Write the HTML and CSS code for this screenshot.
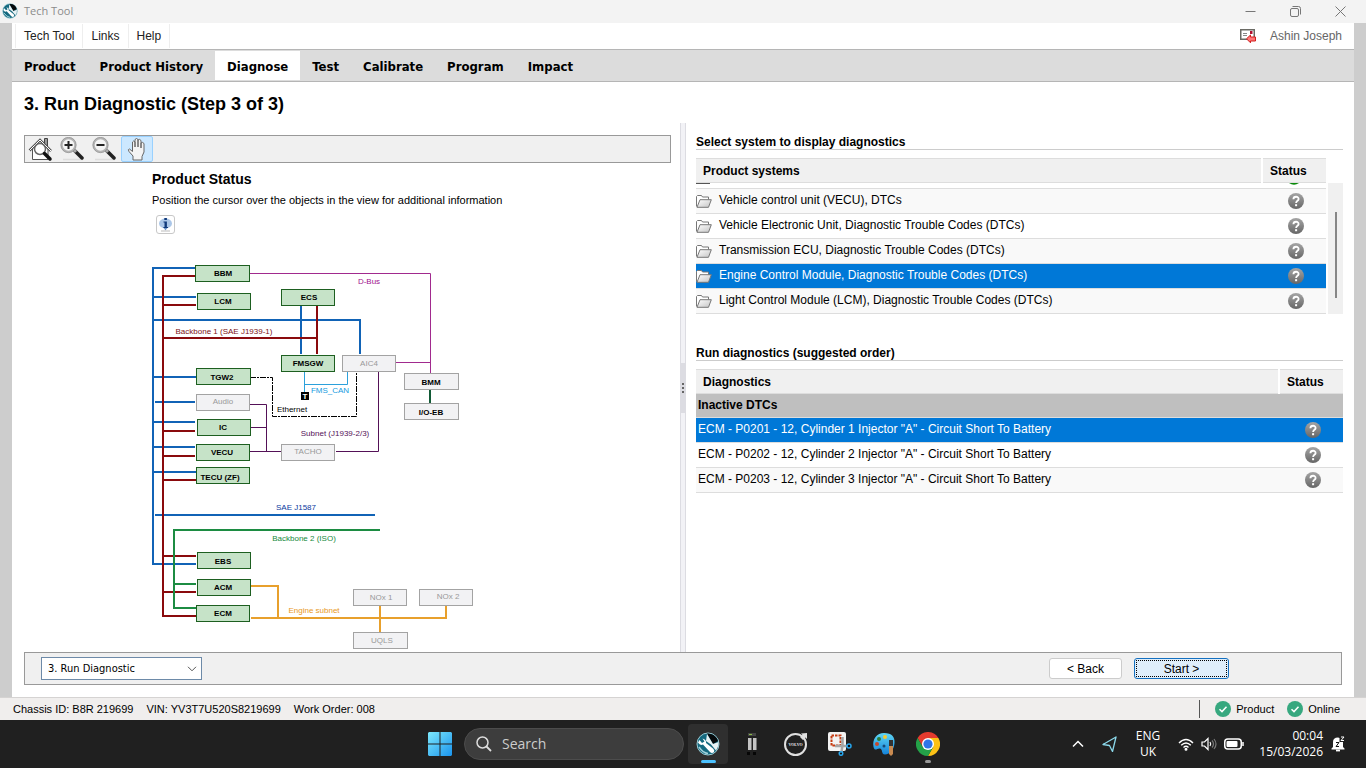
FILE: index.html
```html
<!DOCTYPE html>
<html lang="en">
<head>
<meta charset="utf-8">
<title>Tech Tool</title>
<link rel="stylesheet" href="styles.css">
</head>
<body>
<svg class="defs" aria-hidden="true">
  <defs>
    <linearGradient id="gray" x1="0" y1="0" x2="0" y2="1"><stop offset="0" stop-color="#a5a5a5"/><stop offset="1" stop-color="#666"/></linearGradient>
    <linearGradient id="fold" x1="0" y1="0" x2="1" y2="1"><stop offset="0" stop-color="#fff"/><stop offset="1" stop-color="#c4c4c4"/></linearGradient>
    <linearGradient id="win" x1="0" y1="0" x2="1" y2="1"><stop offset="0" stop-color="#7de8fb"/><stop offset="1" stop-color="#1a94ee"/></linearGradient>
    <linearGradient id="paint" x1="0" y1="0" x2="0" y2="1"><stop offset="0" stop-color="#5fd6f5"/><stop offset="1" stop-color="#1482d8"/></linearGradient>
    <symbol id="q" viewBox="0 0 16 16"><circle cx="8" cy="8" r="8" fill="url(#gray)"/><path d="M5.4 6.2C5.4 2.9 10.8 3 10.6 6.1 10.5 7.8 8.1 7.9 8.1 10" fill="none" stroke="#fff" stroke-width="1.8"/><rect x="7.1" y="11.2" width="2" height="2" fill="#fff"/></symbol>
    <symbol id="folder" viewBox="0 0 16 14"><path d="M.5 12.500V2.500L1.500 1.500H5.500L6.500 3H12.500V5.500" fill="#fff" stroke="#777"/><path d="M1 13.300L4 5.700H15.300L12.500 13.300Z" fill="url(#fold)" stroke="#777"/></symbol>
    <symbol id="logo" viewBox="0 0 24 24"><circle cx="12" cy="12" r="11" fill="#15697f" stroke="#9ccbd4"/><path d="M11 1.5A10.5 10.5 0 0 1 22 9L17 12Z" fill="#05090b"/><path d="M11 2L17 12 22.5 10Q23 14 20 18.5L15 12.5 10 9Z" fill="#e8f2f4"/><path d="M2 10.5Q4 14 7 12.5L14 20Q16 22 18 20 19 18 17 16.5L10 11Q10.500 7.500 6.500 6.500L8.500 9.500 6 11 3.500 8Z" fill="#fff"/><path d="M3 15Q7 21 12 21.500" fill="none" stroke="#9fd0da" stroke-width="1.500"/></symbol>
    <symbol id="ok" viewBox="0 0 16 16"><circle cx="8" cy="8" r="8" fill="#37a87f"/><path d="M4.500 8.200L7 10.600 11.500 5.800" fill="none" stroke="#fff" stroke-width="1.500"/></symbol>
    <symbol id="lens" viewBox="0 0 24 24"><path d="M3 22.500H23" stroke="#ddd" stroke-width="1.500"/><path d="M15 14L22 21" stroke="#222" stroke-width="3.500" stroke-linecap="round"/><path d="M13.500 12.500L16 15" stroke="#aaa" stroke-width="3"/><circle cx="8.500" cy="8" r="6.800" fill="#f4f4f4" stroke="#b5b5b5" stroke-width="2"/><circle cx="8.500" cy="8" r="7.700" fill="none" stroke="#777" stroke-width=".5"/></symbol>
  </defs>
</svg>

<header class="titlebar">
  <svg class="title-logo" aria-hidden="true"><use href="#logo"/></svg>
  <span class="title-text">Tech Tool</span>
  <button class="win-btn" aria-label="Minimize"><svg width="11" height="11" viewBox="0 0 11 11"><path d="M.5 5.500h10" stroke="#777"/></svg></button>
  <button class="win-btn" aria-label="Restore"><svg width="11" height="11" viewBox="0 0 11 11" fill="none" stroke="#777"><rect x=".5" y="2.500" width="8" height="8" rx="1.500"/><path d="M2.500.5H8.500Q10.500.5 10.500 2.500V8.500"/></svg></button>
  <button class="win-btn" aria-label="Close"><svg width="11" height="11" viewBox="0 0 11 11"><path d="M.5.5l10 10M10.500.5l-10 10" stroke="#777"/></svg></button>
</header>

<div class="app">
  <div class="menubar">
    <button class="menu">Tech Tool</button><button class="menu">Links</button><button class="menu">Help</button>
    <svg class="mail" width="17" height="15" viewBox="0 0 17 15" aria-hidden="true"><rect x=".75" y=".75" width="13.500" height="9.500" fill="#fff" stroke="#6b6b65" stroke-width="1.500"/><path d="M3 4.500h4M3 6.500h4" stroke="#888"/><rect x="10" y="2" width="2.500" height="3" fill="#b01030"/><path d="M6.500 9.800L10.500 6V8H15.500V12H10.500V13.800Z" fill="#f77" stroke="#d21c1c"/></svg>
    <span class="user">Ashin Joseph</span>
  </div>
  <nav class="tabs">
    <a href="#" class="tab">Product</a><a href="#" class="tab">Product History</a><a href="#" class="tab active">Diagnose</a><a href="#" class="tab">Test</a><a href="#" class="tab">Calibrate</a><a href="#" class="tab">Program</a><a href="#" class="tab">Impact</a>
  </nav>
  <h1>3. Run Diagnostic (Step 3 of 3)</h1>

  <main class="split">
    <section class="left">
      <div class="tools">
        <button class="tool" aria-label="Fit to view"><svg width="25" height="25" viewBox="0 0 25 25"><path d="M16.500 8V1.500h3V11" fill="#999" stroke="#444"/><path d="M4.500 12V22.500H20V12" fill="#fff" stroke="#555"/><path d="M1.500 13.500L12 3 23 14" fill="none" stroke="#555" stroke-width="2.500"/><path d="M1.500 13.500L12 3 23 14" fill="none" stroke="#fff"/><circle cx="12" cy="12" r="5.500" fill="#fff" stroke="#666" stroke-width="1.500"/><path d="M16.500 16.500L22 22" stroke="#111" stroke-width="3.500" stroke-linecap="round"/></svg></button>
        <button class="tool" aria-label="Zoom in"><svg width="24" height="24" viewBox="0 0 24 24"><use href="#lens"/><path d="M4.500 8h8M8.500 4v8" stroke="#222" stroke-width="2"/></svg></button>
        <button class="tool" aria-label="Zoom out"><svg width="24" height="24" viewBox="0 0 24 24"><use href="#lens"/><path d="M4.500 8h8" stroke="#222" stroke-width="2"/></svg></button>
        <button class="tool pressed" aria-label="Pan"><svg width="24" height="24" viewBox="0 0 24 24"><path d="M8 23V19L4 14.500Q2.500 12 4.500 12L7.500 14.500V5Q8.500 3 10 5V10 2.500Q11.500.5 13 2.500V10 3Q14.500 1.500 16 3.500V11 6Q17.500 4.500 19 6.500V15L17 19.500V23Z" fill="#f4f4f4" stroke="#666"/></svg></button>
      </div>
      <div class="view">
        <h2 class="view-title">Product Status</h2>
        <p class="view-note">Position the cursor over the objects in the view for additional information</p>
        <button class="info" aria-label="Information"><svg width="15" height="15" viewBox="0 0 15 15"><ellipse cx="7.500" cy="6.500" rx="6.500" ry="5" fill="#aac6e8"/><path d="M5 10l2.500 3.500L10 10z" fill="#6b95cb"/><path d="M3 14h9" stroke="#bbb"/><path d="M6.300 1h2.600v2H6.300zM5.500 4.500h3.400V10H10v1H5.500V10h1V5.500h-1z" fill="#103a7c"/></svg></button>
        <svg class="network" viewBox="140 240 350 412" role="img" aria-label="Product network status">
          <g fill="none" stroke="#1163b6" stroke-width="2">
            <path d="M196 268H153V564H196M153 297H196M153 320H360V354M301 306V354M153 377H196M155 402H195M153 422H195M153 447H195M153 472H196M155 515H375"/>
          </g>
          <g fill="none" stroke="#8a0a0d" stroke-width="2">
            <path d="M196 276H163V616H196M163 305H196M163 338H317V306M317 338V354M163 431H195M163 456H195M163 480H196M163 556H196M163 592H196"/>
          </g>
          <path d="M380 530H174V608H196M174 584H196" fill="none" stroke="#1c8c42" stroke-width="2"/>
          <path d="M251 586H278V618M251 618H446V605M380 605V632" fill="none" stroke="#e8a02c" stroke-width="2"/>
          <path d="M250 273.500H430.500V374M396 362.500H430.500" fill="none" stroke="#a12a8e"/>
          <path d="M250 404.500H266.500V451.500M251 427.500H266.500M250 451.500H281M336 451.500H378.500V372" fill="none" stroke="#541157"/>
          <path d="M304.500 372V392M304.500 384.500H347.500V372" fill="none" stroke="#2ba0db"/>
          <path d="M250 377.500H272.500V416.500H356.500V372" fill="none" stroke="#000" stroke-dasharray="6 1 2 1"/>
          <path d="M430 390V403" stroke="#125a36" stroke-width="2"/>
          <rect x="301" y="392" width="8" height="8" fill="#000"/><text x="305" y="399" fill="#fff" font-size="8" font-weight="bold">T</text>
          <g class="on">
            <rect x="195.500" y="265.500" width="54" height="16"/><rect x="197.500" y="293.500" width="53" height="16"/><rect x="281.500" y="289.500" width="53" height="16"/>
            <rect x="281.500" y="355.500" width="53" height="16"/><rect x="196.500" y="368.500" width="54" height="16"/><rect x="197.500" y="419.500" width="53" height="16"/>
            <rect x="196.500" y="444.500" width="53" height="16"/><rect x="196.500" y="467.500" width="53" height="16"/><rect x="197.500" y="552.500" width="53" height="16"/>
            <rect x="197.500" y="579.500" width="53" height="16"/><rect x="196.500" y="605.500" width="53" height="16"/>
          </g>
          <g class="off">
            <rect x="342.500" y="355.500" width="53" height="16"/><rect x="404.500" y="373.500" width="54" height="16"/><rect x="404.500" y="403.500" width="54" height="16"/>
            <rect x="196.500" y="394.500" width="53" height="16"/><rect x="281.500" y="444.500" width="53" height="16"/><rect x="353.500" y="589.500" width="53" height="16"/>
            <rect x="419.500" y="589.500" width="53" height="16"/><rect x="353.500" y="632.500" width="54" height="16"/>
          </g>
          <g class="lbl strong">
            <text x="223" y="276">BBM</text><text x="223" y="304">LCM</text><text x="309" y="300">ECS</text><text x="308" y="366">FMSGW</text>
            <text x="222" y="380">TGW2</text><text x="223" y="430">IC</text><text x="222" y="455">VECU</text><text x="220" y="480">TECU (ZF)</text>
            <text x="223" y="564">EBS</text><text x="223" y="590">ACM</text><text x="223" y="616">ECM</text><text x="431" y="385">BMM</text><text x="431" y="415">I/O-EB</text>
          </g>
          <g class="lbl dim">
            <text x="369" y="366">AIC4</text><text x="223" y="404">Audio</text><text x="308" y="454">TACHO</text><text x="381" y="600">NOx 1</text><text x="448" y="599">NOx 2</text><text x="382" y="643">UQLS</text>
          </g>
          <g class="lbl">
            <text x="292" y="412">Ethernet</text>
            <text x="369" y="284" fill="#a0128e">D-Bus</text><text x="224" y="334" fill="#7a0f14">Backbone 1 (SAE J1939-1)</text><text x="330" y="393" fill="#149ae0">FMS_CAN</text>
            <text x="335" y="436" fill="#541157">Subnet (J1939-2/3)</text><text x="296" y="510" fill="#0a3aa0">SAE J1587</text><text x="304" y="541" fill="#158a3c">Backbone 2 (ISO)</text><text x="314" y="613" fill="#e8981c">Engine subnet</text>
          </g>
        </svg>
      </div>
    </section>

    <div class="splitter"><div class="grip"><i></i><i></i><i></i></div></div>

    <section class="right">
      <h2 class="section">Select system to display diagnostics</h2>
      <div class="systems">
        <table>
          <colgroup><col><col class="col-status"></colgroup>
          <thead><tr><th>Product systems</th><th>Status</th></tr></thead>
          <tbody>
            <tr class="clipped"><td><svg width="14" height="1"><rect width="14" height="1" fill="#555"/></svg></td><td class="st"><svg width="12" height="2" viewBox="0 0 12 2"><path d="M1 0h10Q6 3.500 1 0z" fill="#0a8a0a"/></svg></td></tr>
            <tr class="alt"><td><div class="sys"><svg class="folder"><use href="#folder"/></svg>Vehicle control unit (VECU), DTCs</div></td><td class="st"><svg class="q"><use href="#q"/></svg></td></tr>
            <tr><td><div class="sys"><svg class="folder"><use href="#folder"/></svg>Vehicle Electronic Unit, Diagnostic Trouble Codes (DTCs)</div></td><td class="st"><svg class="q"><use href="#q"/></svg></td></tr>
            <tr class="alt"><td><div class="sys"><svg class="folder"><use href="#folder"/></svg>Transmission ECU, Diagnostic Trouble Codes (DTCs)</div></td><td class="st"><svg class="q"><use href="#q"/></svg></td></tr>
            <tr class="sel"><td><div class="sys"><svg class="folder"><use href="#folder"/></svg>Engine Control Module, Diagnostic Trouble Codes (DTCs)</div></td><td class="st"><svg class="q"><use href="#q"/></svg></td></tr>
            <tr class="alt"><td><div class="sys"><svg class="folder"><use href="#folder"/></svg>Light Control Module (LCM), Diagnostic Trouble Codes (DTCs)</div></td><td class="st"><svg class="q"><use href="#q"/></svg></td></tr>
          </tbody>
        </table>
        <div class="track"><div class="thumb"></div></div>
      </div>
      <h2 class="section second">Run diagnostics (suggested order)</h2>
      <table class="diags">
        <colgroup><col><col class="col-status"></colgroup>
        <thead><tr><th>Diagnostics</th><th>Status</th></tr></thead>
        <tbody>
          <tr class="group"><td colspan="2">Inactive DTCs</td></tr>
          <tr class="sel"><td>ECM - P0201 - 12, Cylinder 1 Injector "A" - Circuit Short To Battery</td><td class="st"><svg class="q"><use href="#q"/></svg></td></tr>
          <tr><td>ECM - P0202 - 12, Cylinder 2 Injector "A" - Circuit Short To Battery</td><td class="st"><svg class="q"><use href="#q"/></svg></td></tr>
          <tr class="alt"><td>ECM - P0203 - 12, Cylinder 3 Injector "A" - Circuit Short To Battery</td><td class="st"><svg class="q"><use href="#q"/></svg></td></tr>
        </tbody>
      </table>
    </section>
  </main>

  <div class="actions">
    <div class="step-box">
      <select class="step" aria-label="Step"><option>3. Run Diagnostic</option></select>
      <svg class="step-arrow" width="10" height="6" viewBox="0 0 10 6" aria-hidden="true"><path d="M1 .8l4 4 4-4" fill="none" stroke="#555"/></svg>
    </div>
    <button class="btn">&lt; Back</button>
    <button class="btn primary"><span>Start &gt;</span></button>
  </div>
</div>

<footer class="status">
  <span>Chassis ID: B8R 219699</span><span>VIN: YV3T7U520S8219699</span><span>Work Order: 008</span>
  <div class="links"><svg class="q"><use href="#ok"/></svg><span>Product</span><svg class="q"><use href="#ok"/></svg><span>Online</span></div>
</footer>

<div class="taskbar">
  <div class="dock">
    <button class="task" aria-label="Start"><svg width="24" height="24" viewBox="0 0 24 24"><path d="M1 0h10.500v11.500H0V1zM12.500 0H23l1 1v10.500H12.500zM0 12.500h11.500V24H1l-1-1zM12.500 12.500H24V23l-1 1H12.500z" fill="url(#win)"/></svg></button>
    <label class="search"><svg width="16" height="16" viewBox="0 0 16 16"><circle cx="6.500" cy="6.500" r="5.500" fill="none" stroke="#ddd" stroke-width="1.500"/><path d="M10.500 10.500L15 15" stroke="#ddd" stroke-width="1.800"/></svg><input type="text" placeholder="Search" aria-label="Search"></label>
    <button class="task open" aria-label="Tech Tool"><svg width="24" height="24"><use href="#logo"/></svg></button>
    <button class="task" aria-label="Adapter"><svg width="12" height="24" viewBox="0 0 12 24"><rect x="2" y="1" width="8" height="3" fill="#444"/><rect x="3" y="2" width="3" height="1" fill="#8b4"/><rect x="2" y="6" width="3.500" height="12" fill="#c4c4c4"/><rect x="7" y="6" width="3.500" height="12" fill="#c4c4c4"/><rect x="1" y="20" width="3" height="3" fill="#060606"/><rect x="7" y="20" width="3" height="3" fill="#060606"/></svg></button>
    <button class="task" aria-label="Volvo"><svg width="24" height="24" viewBox="0 0 24 24"><circle cx="11.500" cy="12.500" r="10.500" fill="none" stroke="#e0e0e0" stroke-width="2"/><path d="M17 1.500L23 1V7L21.500 5.500 19 8 16 5 18.500 3Z" fill="#e0e0e0"/><text x="11.500" y="14" text-anchor="middle" class="volvo">VOLVO</text></svg></button>
    <button class="task" aria-label="Snipping Tool"><svg width="24" height="24" viewBox="0 0 24 24"><rect x="0" y="0" width="18" height="19" rx="2" fill="#f3f3f3"/><rect x="3.500" y="3.500" width="9" height="10" fill="none" stroke="#c53c13" stroke-width="2" stroke-dasharray="2.500 1"/><path d="M7 14H12L20 14M14.500 5V13L13.500 20" fill="none" stroke="#a5a5a5" stroke-width="2.500"/><circle cx="21" cy="14" r="2" fill="#111" stroke="#26a5ec" stroke-width="1.500"/><circle cx="13" cy="21.500" r="1.800" fill="#111" stroke="#26a5ec" stroke-width="1.500"/></svg></button>
    <button class="task" aria-label="Paint"><svg width="24" height="24" viewBox="0 0 24 24"><path d="M12 1C20 1 23 5 22.500 11 22 18 18 22 13 22.500 9 22.500 11 17 8 16.500 5 16 3 20 1.500 15 0 7 5 1 12 1Z" fill="url(#paint)"/><circle cx="7" cy="7" r="2" fill="#2a7d38"/><circle cx="13" cy="5" r="2" fill="#f2c832"/><circle cx="5" cy="12" r="2" fill="#c8482b"/><circle cx="12" cy="14" r="1.500" fill="#174a78"/><rect x="17" y="8" width="4" height="7" fill="#333"/><path d="M17 14h4v8l-2 2-2-2z" fill="#c98a50"/></svg></button>
    <button class="task running" aria-label="Chrome"><svg width="24" height="24" viewBox="0 0 24 24"><path d="M12 6H22.400A12 12 0 0 1 12 24L17.200 15Z" fill="#fbc116"/><path d="M12 6H22.400A12 12 0 0 0 1.600 6L6.800 15Z" fill="#e33b2e"/><path d="M1.600 6L6.800 15 17.200 15 12 24A12 12 0 0 1 1.600 6Z" fill="#24a148"/><circle cx="12" cy="12" r="6" fill="#fff"/><circle cx="12" cy="12" r="4.600" fill="#2f75e8"/></svg></button>
  </div>
  <div class="tray">
    <svg width="12" height="8" viewBox="0 0 12 8"><path d="M1 6.500L6 1.500 11 6.500" fill="none" stroke="#fff" stroke-width="1.500"/></svg>
    <svg width="15" height="16" viewBox="0 0 15 16"><path d="M14 1L1 8.500 7.500 9.500 10.500 15.500Z" fill="none" stroke="#8bd8ea" stroke-width="1.300" stroke-linejoin="round"/></svg>
    <div class="lang">ENG<br>UK</div>
    <div class="net">
      <svg width="16" height="13" viewBox="0 0 16 13" fill="none" stroke="#fff" stroke-width="1.400"><path d="M1 5Q8-2 15 5M3.200 7.200Q8 2.600 12.800 7.200M5.500 9.400Q8 7 10.500 9.400"/><circle cx="8" cy="11.300" r=".8" fill="#fff"/></svg>
      <svg width="16" height="14" viewBox="0 0 16 14" fill="none" stroke="#fff" stroke-width="1.200"><path d="M1 5h2.500L7 1.500v11L3.500 9H1z"/><path d="M9 5q1.500 2 0 4"/><path d="M11 3.500q3 3.500 0 7M13 2q4 5 0 10" stroke="#777"/></svg>
      <svg width="20" height="12" viewBox="0 0 20 12"><rect x=".75" y="1" width="16.500" height="10" rx="3" fill="none" stroke="#fff" stroke-width="1.500"/><rect x="2.500" y="3" width="11" height="6" rx="1" fill="#fff"/><path d="M19 4v4" stroke="#fff" stroke-width="1.500"/></svg>
    </div>
    <div class="clock">00:04<br>15/03/2026</div>
    <svg width="14" height="16" viewBox="0 0 14 16"><path d="M2 11V6Q2 1.500 7 1.500 8 1.500 8.500 2V6H12V11L13.500 12.500V13.500H.5V12.500Z" fill="#fff"/><path d="M5 14.500h4" stroke="#fff" stroke-width="1.800"/><path d="M5 6.500h3l-3 4h3" fill="none" stroke="#111"/><path d="M10 1h3l-3 3.500h3" fill="none" stroke="#fff"/></svg>
  </div>
</div>
</body>
</html>
```
FILE: styles.css
```css
* { box-sizing: border-box; }
body {
  margin: 0;
  min-height: 100vh;
  display: flex;
  flex-direction: column;
  background: #fff;
  color: #000;
  font: 12px/16px "Liberation Sans", Arial, sans-serif;
}
button, input, select { font: inherit; color: inherit; }
button { padding: 0; border: 0; background: none; }
svg { display: block; flex: none; }
.defs { position: absolute; width: 0; height: 0; }

.titlebar { display: flex; align-items: center; height: 23px; padding: 0 3px 1px 2px; background: #f3f3f3; }
.title-logo { width: 16px; height: 16px; }
.title-text { flex: 1; margin-left: 6px; color: #8b8b8b; font-family: "Open Sans", sans-serif; font-size: 11px; }
.win-btn { display: flex; justify-content: center; width: 45px; }

.app { flex: 1; display: flex; flex-direction: column; border: solid #cdcdcd; border-width: 0 12px; }
.menubar { display: flex; align-items: center; height: 26px; padding: 0 12px 0 3px; }
.menu { height: 24px; padding: 0 8px; border: 1px solid #eee; border-width: 0 1px; margin-right: -1px; color: #222; }
.mail { margin-left: auto; }
.user { margin-left: 13px; color: #666; }

.tabs { display: flex; height: 33px; padding: 1px 0; background: #dcdcdc; border: solid #b5b5b5; border-width: 1px 0; }
.tab { padding: 0 12px; font: bold 13px/31px "DejaVu Sans Condensed", Tahoma, sans-serif; color: #000; text-decoration: none; }
.active { height: 29px; background: #fff; }
h1 { margin: 0; padding: 12px 12px 9px; font-size: 18px; line-height: 20px; }

.split { flex: 1; display: flex; }
.left { flex: 668; min-width: 0; display: flex; flex-direction: column; padding: 12px 12px 0; }
.tools { display: flex; height: 28px; border: 1px solid #999; background: #f0f0f0; }
.tool { display: flex; align-items: center; justify-content: center; width: 32px; padding-right: 2px; }
.pressed { padding-right: 0; background: #cce8ff; border: 1px solid #99d1ff; border-radius: 2px; }
.view { padding-left: 128px; }
.view-title { margin: 8px 0 0; font-size: 14px; line-height: 16px; }
.view-note { margin: 5px 0 7px; font-size: 11px; line-height: 16px; }
.info { display: flex; align-items: center; justify-content: center; width: 19px; height: 19px; margin-left: 4px; border: 1px solid #c8c8c8; border-radius: 3px; }
.network { width: 350px; height: 412px; margin: 6px 0 0 -12px; }
.network text { text-anchor: middle; }
.on rect { fill: #c6e3c8; stroke: #1d5f20; }
.off rect { fill: #f2f2f4; stroke: #a3a3a3; }
.lbl { font-size: 8px; }
.strong { font-weight: bold; }
.dim { fill: #999; }

.splitter { display: flex; align-items: center; width: 6px; background: #f2f2f6; border: solid #dcdce2; border-width: 0 1px; }
.grip { display: flex; flex-direction: column; align-items: center; justify-content: center; gap: 2px; width: 100%; height: 50px; background: #dcdce2; }
.grip i { width: 2px; height: 2px; background: #666; }

.right { flex: 668; min-width: 0; padding: 11px 11px 0 10px; }
.left { flex: 0 0 50%; margin-right: -3px; }
.section { margin: 0 0 8px; height: 16px; border-bottom: 1px solid #ccc; font-size: 12px; line-height: 16px; }
.second { margin-top: 31px; }
table { width: 100%; border-collapse: collapse; table-layout: fixed; }
.col-status { width: 64px; }
th { height: 24px; padding: 0 7px; background: #f0f0f0; border: solid #ddd; border-width: 1px 0; text-align: left; }
th + th { border-left: 2px solid #fff; }
td { height: 25px; padding: 0 2px 2px; border-bottom: 1px solid #ddd; }
.alt { background: #f9f9f9; }
.sel { background: #0078d7; color: #fff; }
.group { background: #bfbfbf; font-weight: bold; }
.group td { height: 24px; }
.clipped td { height: 6px; padding: 0; line-height: 1px; vertical-align: top; }
.st { padding: 0 0 0 4px; }
.st svg { margin: 0 auto; }
.sys { display: flex; align-items: center; gap: 7px; }
.systems td:first-child { padding-left: 0; }
.folder { width: 16px; height: 14px; margin-top: 2px; }
.q { width: 16px; height: 16px; }
.systems { display: flex; gap: 2px; }
.track { flex: none; width: 15px; margin-top: 25px; padding: 29px 6px 16px 7px; background: #f0f0f0; }
.thumb { height: 100%; background: #868686; }

.actions { display: flex; align-items: center; height: 33px; margin: 0 12px 12px; padding: 0 112px 0 16px; background: #f0f0f0; border: 1px solid #999; }
.step-box { position: relative; margin-right: auto; }
.step { appearance: none; display: block; width: 161px; height: 23px; padding: 0 6px; border: 1px solid #6d8aa8; border-radius: 0; background: #fff; font: 11px/20px "DejaVu Sans Condensed", Tahoma, sans-serif; }
.step-arrow { position: absolute; right: 5px; top: 9px; }
.btn { width: 73px; height: 21px; border: 1px solid #ccc; border-radius: 3px; background: #fff; }
.primary { width: 95px; margin-left: 12px; padding: 1px; border: 1px solid #1470c0; background: #dfeefb; }
.primary span { display: block; height: 17px; line-height: 16px; border: 1px dotted #000; }

.status { display: flex; align-items: center; gap: 13px; height: 23px; padding: 0 26px 0 13px; background: #f0eeed; border-top: 1px solid #d5d3d2; font-size: 11px; }
.links { display: flex; align-items: center; gap: 5px; height: 18px; margin-left: auto; padding-left: 15px; border-left: 1px solid #555; }
.links span + svg { margin-left: 8px; }

.taskbar { display: grid; grid-template-columns: 1fr auto 1fr; align-items: center; height: 48px; background: #202020; color: #fff; font-family: "Open Sans", sans-serif; }
.dock { grid-column: 2; display: flex; align-items: center; gap: 4px; padding-left: 2px; }
.task { position: relative; display: flex; align-items: center; justify-content: center; width: 40px; height: 40px; border-radius: 4px; }
.open { background: #2f2f2f; }
.open::after, .running::after { content: ""; position: absolute; bottom: 1px; width: 15px; height: 3px; border-radius: 2px; background: #4cc2ff; }
.running::after { width: 6px; background: #999; }
.volvo { fill: #eee; font: bold 4px "Liberation Serif", serif; }
.search { display: flex; align-items: center; gap: 10px; width: 220px; height: 32px; padding: 0 11px; border: 1px solid #4c4c4c; border-radius: 16px; background: #3d3d3d; }
.search input { width: 100%; padding: 0; border: 0; outline: 0; background: none; font-size: 14px; }
.search input::placeholder { color: #ccc; }
.tray { display: flex; align-items: center; justify-content: flex-end; padding-right: 21px; font-size: 12px; }
.tray > svg + svg { margin-left: 18px; }
.lang { margin-left: 19px; text-align: center; }
.net { display: flex; align-items: center; gap: 7px; margin: 0 15px 0 18px; }
.clock { margin-right: 8px; text-align: right; }
```
